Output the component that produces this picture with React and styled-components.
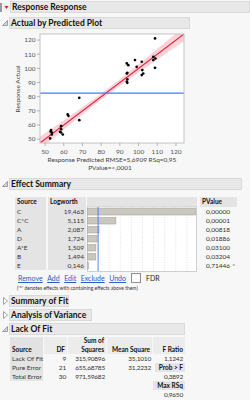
import React from "react";
import styled, { createGlobalStyle } from "styled-components";

const GlobalStyle = createGlobalStyle`
  html, body {
    margin: 0;
    padding: 0;
    background: #f7f7f7;
  }
  body {
    font-family: Lato, "Liberation Sans", sans-serif;
    color: #222;
  }
`;

const Page = styled.div`
  width: 250px;
  height: 400px;
  overflow: hidden;
  padding-top: 1px;
  box-sizing: border-box;
`;

const OutlineRow = styled.div`
  display: flex;
  align-items: center;
  height: 12px;
  margin-top: ${(p) => p.$top || 0}px;
`;

const Toggle = styled.svg`
  display: block;
  flex: none;
`;

const TitleBar = styled.div`
  width: ${(p) => p.$w}px;
  height: 12px;
  box-sizing: border-box;
  background: #e8e8e8;
  border: 1px solid #d9d9d9;
  padding-left: 1px;
  font-size: 8.5px;
  font-weight: 700;
  line-height: 10px;
  color: #111;
  white-space: nowrap;
`;

const PlotSvg = styled.svg`
  display: block;
  margin-top: 2px;
  font-family: Lato, "Liberation Sans", sans-serif;
`;

/* effect summary table */
const EffectGrid = styled.div`
  display: grid;
  grid-template-columns: 33px 39px 113px 37px;
  grid-template-rows: 10px repeat(7, 9px);
  margin: 7px 0 0 15px;
  font-size: 6.5px;
`;

const Cell = styled.div`
  background: ${(p) => (p.$shade ? "#e4e4e4" : "transparent")};
  margin-right: ${(p) => p.$gap || 0}px;
  font-weight: ${(p) => (p.$head ? 700 : 400)};
  text-align: ${(p) => (p.$right ? "right" : "left")};
  padding: 0 2px;
  line-height: ${(p) => p.$lh || 9}px;
  white-space: nowrap;
  color: ${(p) => (p.$head ? "#111" : "#333")};
`;

const BarChart = styled.svg`
  grid-column: 3;
  grid-row: 2 / span 7;
  display: block;
  overflow: visible;
`;

const PCell = styled.div`
  display: flex;
  line-height: 9px;
  color: #333;
`;

const PValue = styled.span`
  width: 30px;
  text-align: right;
`;

const Caret = styled.span`
  margin-left: 2px;
  color: #777;
  font-size: 6px;
`;

const LinkRow = styled.div`
  display: flex;
  align-items: center;
  gap: 4.5px;
  height: 10px;
  margin: 3px 0 0 18px;
  font-size: 7px;
`;

const Link = styled.a`
  color: #2a5cc2;
  text-decoration: underline;
  cursor: pointer;
`;

const Check = styled.span`
  width: 8px;
  height: 8px;
  margin-left: 1px;
  background: #fff;
  border: 1px solid #8c8c8c;
`;

const Note = styled.div`
  margin: 2px 0 0 17px;
  font-size: 5px;
  line-height: 6px;
  color: #333;
  white-space: nowrap;
`;

/* lack of fit table */
const FitGrid = styled.div`
  display: grid;
  grid-template-columns: 34px 24px 39px 46px 32px;
  grid-template-rows: 8px 9px repeat(5, 9px);
  margin: 2px 0 0 10px;
  font-size: 6.5px;
`;

const FitHead = styled.div`
  grid-row: 1 / span 2;
  display: flex;
  flex-direction: column;
  justify-content: flex-end;
  align-items: ${(p) => (p.$left ? "flex-start" : "flex-end")};
  background: ${(p) => (p.$dark ? "#e2e2e2" : "#ececec")};
  margin-right: ${(p) => (p.$last ? 0 : 1)}px;
  padding: 0 2px 0 2px;
  font-weight: 700;
  line-height: 8.5px;
  color: #111;
  white-space: nowrap;
`;

const Num = styled.span`
  letter-spacing: -0.2px;
`;

const CARD = [
  ["C", 19.463, "0,00000"],
  ["C*C", 5.115, "0,00001"],
  ["A", 2.087, "0,00818"],
  ["D", 1.724, "0,01886"],
  ["A*E", 1.509, "0,03100"],
  ["B", 1.494, "0,03204"],
  ["E", 0.146, "0,71446"],
];

const POINTS = [
  [52.7, 50.5], [53.2, 56.4], [53.6, 54.7], [53.6, 53.3], [53.0, 55.5],
  [58.6, 59.2], [58.6, 57.1], [58.6, 54.7], [59.5, 53.3], [58.0, 55.2],
  [62.1, 67.5], [62.5, 66.5], [68.3, 79.2], [68.3, 63.4],
  [93.7, 96.4], [93.7, 90.5], [94.5, 102.3], [99, 101.1], [98.1, 105.9],
  [101.7, 104.7], [102, 98.8], [102.5, 96.4], [101.7, 95.3],
  [107.9, 108.2], [107.9, 105.9], [108.8, 100.4], [108.8, 121.2],
  [93.7, 103.5], [94, 96.9], [94, 92.2], [94, 89.8], [109, 107],
];

const LO = 47.3;
const HI = 124.3;
const px = (v) => 40 + ((v - LO) * 144) / (HI - LO);
const py = (v) => 112 - ((v - LO) * 109) / (HI - LO);

function bandPath() {
  const steps = 40;
  const top = [];
  const bot = [];
  for (let i = 0; i <= steps; i++) {
    const v = LO + ((HI - LO) * i) / steps;
    const h = Math.sqrt(2.2 * 2.2 + Math.pow(0.11 * (v - 82), 2));
    top.push(`${px(v).toFixed(2)},${py(v + h).toFixed(2)}`);
    bot.unshift(`${px(v).toFixed(2)},${py(v - h).toFixed(2)}`);
  }
  return `M${top.join(" L")} L${bot.join(" L")} Z`;
}

function OpenTri() {
  return (
    <Toggle width="9" height="12" viewBox="0 0 9 12">
      <path d="M7.5 3.5 L7.5 8.5 L2.5 8.5 Z" fill="#d6d6d6" stroke="#8a8a8a" strokeWidth="0.8" />
    </Toggle>
  );
}

function ClosedTri() {
  return (
    <Toggle width="9" height="12" viewBox="0 0 9 12">
      <path d="M3.5 2.5 L7.5 6 L3.5 9.5 Z" fill="#fff" stroke="#8a8a8a" strokeWidth="0.8" />
    </Toggle>
  );
}

function RedMenu() {
  return (
    <Toggle width="10" height="12" viewBox="0 0 10 12">
      <rect x="0" y="2" width="2" height="9" fill="#9a9a9a" />
      <rect x="3.5" y="3" width="6" height="7" fill="#efefef" />
      <path d="M4.5 5 L8.5 5 L6.5 8 Z" fill="#d4202c" />
    </Toggle>
  );
}

function Plot() {
  const ticks = [50, 60, 70, 80, 90, 100, 110, 120];
  return (
    <PlotSvg width="195" height="142" viewBox="0 0 195 142">
      <defs>
        <clipPath id="frame">
          <rect x="40" y="3" width="144" height="109" />
        </clipPath>
      </defs>
      <rect x="40" y="3" width="144" height="109" fill="#fff" />
      <g clipPath="url(#frame)">
        <path d={bandPath()} fill="rgba(236, 88, 108, 0.27)" />
        <line x1={px(LO)} y1={py(LO)} x2={px(HI)} y2={py(HI)} stroke="#e8203a" strokeWidth="1.1" />
        <line x1="40" y1={py(82.5)} x2="184" y2={py(82.5)} stroke="#3f7ff2" strokeWidth="1.3" />
        {POINTS.map(([a, b], i) => (
          <circle key={i} cx={px(a)} cy={py(b)} r="1.35" fill="#000" />
        ))}
      </g>
      <rect x="40" y="3" width="144" height="109" fill="none" stroke="#c4c4c4" strokeWidth="1" />
      {ticks.map((t) => (
        <g key={t} fontSize="6.5" fill="#555">
          <line x1="37" y1={py(t)} x2="40" y2={py(t)} stroke="#999" strokeWidth="0.7" />
          <text x="35.5" y={py(t) + 2.3} textAnchor="end">{t}</text>
          <line x1={px(t)} y1="112" x2={px(t)} y2="115" stroke="#999" strokeWidth="0.7" />
          <text x={px(t)} y="122.5" textAnchor="middle">{t}</text>
        </g>
      ))}
      <text x="17.5" y="58" fontSize="6.5" fill="#444" textAnchor="middle" transform="rotate(-90 17.5 58)" dy="2">
        Response Actual
      </text>
      <text x="112" y="131" fontSize="6.5" fill="#444" textAnchor="middle">
        Response Predicted RMSE=5,6909 RSq=0,95
      </text>
      <text x="110" y="139" fontSize="6.5" fill="#444" textAnchor="middle">
        PValue=&lt;,0001
      </text>
    </PlotSvg>
  );
}

function Bars() {
  const scale = 108 / 19.463;
  return (
    <BarChart width="110" height="65" viewBox="0 0 110 65">
      <rect x="0.5" y="0" width="109" height="64.5" fill="#fff" stroke="#cfcfcf" strokeWidth="1" />
      {[4, 6, 8, 10, 12, 14, 16, 18].map((k) => (
        <line key={k} x1={k * scale} y1="0" x2={k * scale} y2="64" stroke="#c9c9c9" strokeWidth="0.6" strokeDasharray="1 1.5" />
      ))}
      {CARD.map(([s, lw], i) => (
        <rect key={s} x="0.5" y={9 * i + 1.5} width={Math.max(lw * scale, 0.8)} height="6.5" fill="#c9c7be" stroke="#a7a59c" strokeWidth="0.6" />
      ))}
      <line x1={2 * scale} y1="0" x2={2 * scale} y2="64" stroke="#4a86f0" strokeWidth="1" />
    </BarChart>
  );
}

export default function App() {
  return (
    <Page>
      <GlobalStyle />
      <OutlineRow>
        <RedMenu />
        <TitleBar $w={240}>Response Response</TitleBar>
      </OutlineRow>

      <OutlineRow $top={4}>
        <OpenTri />
        <TitleBar $w={181}>Actual by Predicted Plot</TitleBar>
      </OutlineRow>
      <Plot />

      <OutlineRow $top={5}>
        <OpenTri />
        <TitleBar $w={233}>Effect Summary</TitleBar>
      </OutlineRow>
      <EffectGrid>
        <Cell $shade $head $gap={2} $lh={10}>Source</Cell>
        <Cell $shade $head $gap={1} $lh={10}>Logworth</Cell>
        <Cell $shade $gap={3} $lh={10} />
        <Cell $shade $head $lh={10}>PValue</Cell>
        {CARD.map(([s, lw, p], i) => (
          <React.Fragment key={s}>
            <Cell $shade $gap={2} style={{ gridRow: i + 2, gridColumn: 1 }}>{s}</Cell>
            <Cell $shade $gap={1} $right style={{ gridRow: i + 2, gridColumn: 2 }}>
              {lw.toFixed(3).replace(".", ",")}
            </Cell>
            <PCell style={{ gridRow: i + 2, gridColumn: 4 }}>
              <PValue>{p}</PValue>
              {s === "E" && <Caret>^</Caret>}
            </PCell>
          </React.Fragment>
        ))}
        <Bars />
      </EffectGrid>

      <LinkRow>
        <Link>Remove</Link>
        <Link>Add</Link>
        <Link>Edit</Link>
        <Link>Exclude</Link>
        <Link>Undo</Link>
        <Check />
        <span>FDR</span>
      </LinkRow>
      <Note>('^' denotes effects with containing effects above them)</Note>

      <OutlineRow $top={4}>
        <ClosedTri />
        <TitleBar $w={60}>Summary of Fit</TitleBar>
      </OutlineRow>
      <OutlineRow $top={2}>
        <ClosedTri />
        <TitleBar $w={83}>Analysis of Variance</TitleBar>
      </OutlineRow>
      <OutlineRow $top={2}>
        <OpenTri />
        <TitleBar $w={176}>Lack Of Fit</TitleBar>
      </OutlineRow>

      <FitGrid>
        <FitHead $left $dark>Source</FitHead>
        <FitHead>DF</FitHead>
        <FitHead>
          <span>Sum of</span>
          <span>Squares</span>
        </FitHead>
        <FitHead>Mean Square</FitHead>
        <FitHead $last>F Ratio</FitHead>

        <Cell $shade $gap={1}>Lack Of Fit</Cell>
        <Cell $right><Num>9</Num></Cell>
        <Cell $right><Num>315,90896</Num></Cell>
        <Cell $right><Num>35,1010</Num></Cell>
        <Cell $right><Num>1,1242</Num></Cell>

        <Cell $shade $gap={1}>Pure Error</Cell>
        <Cell $right><Num>21</Num></Cell>
        <Cell $right><Num>655,68785</Num></Cell>
        <Cell $right><Num>31,2232</Num></Cell>
        <Cell $shade $head $right style={{ marginLeft: 2 }}>Prob &gt; F</Cell>

        <Cell $shade $gap={1}>Total Error</Cell>
        <Cell $right><Num>30</Num></Cell>
        <Cell $right><Num>971,59682</Num></Cell>
        <Cell />
        <Cell $right><Num>0,3892</Num></Cell>

        <Cell style={{ gridColumn: 5 }} $shade $head $right>Max RSq</Cell>
        <Cell style={{ gridColumn: 5 }} $right><Num>0,9650</Num></Cell>
      </FitGrid>
    </Page>
  );
}
